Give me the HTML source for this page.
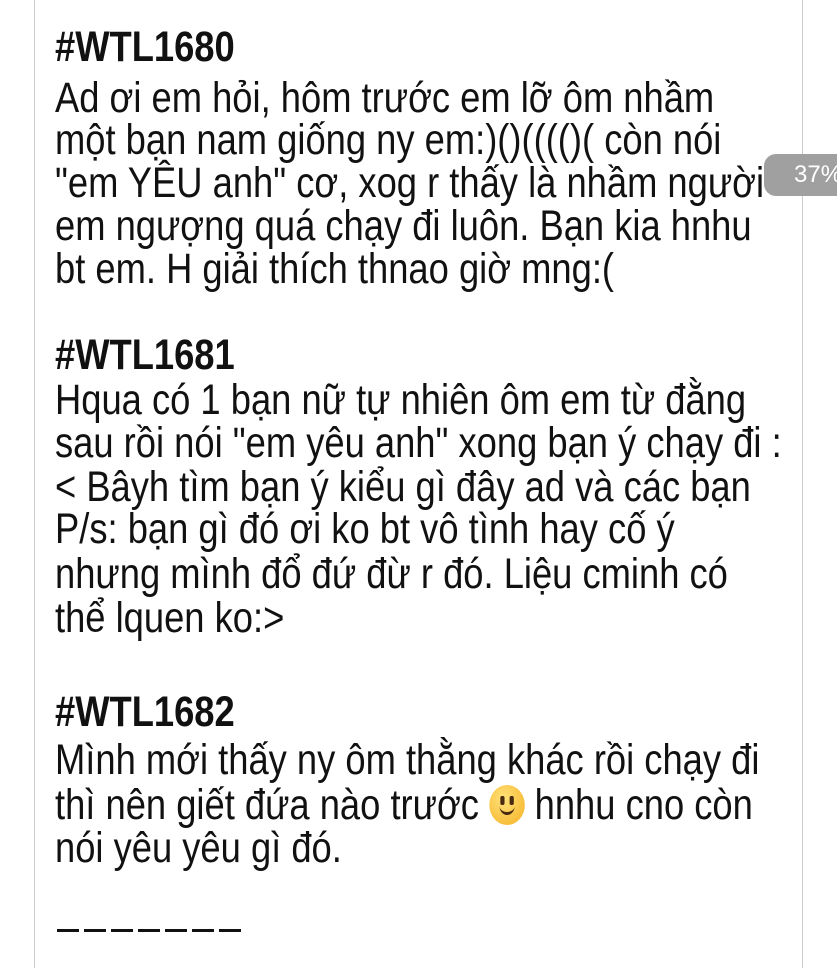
<!DOCTYPE html>
<html><head><meta charset="utf-8"><style>
body{margin:0;width:837px;height:960px;background:#fff;overflow:hidden;position:relative;font-family:"Liberation Sans",sans-serif;color:#111}
.card{position:absolute;left:34px;top:-2px;width:767px;height:970px;border-left:1px solid #ccc;border-right:1px solid #ccc}
.l{position:absolute;left:55px;font-size:43px;line-height:44px;white-space:nowrap;transform:scaleX(0.845);transform-origin:left center}
.b{font-weight:bold}
.badge{position:absolute;left:764px;top:154px;width:76px;height:42px;border-radius:12px 0 0 12px;background:#a0a0a0;color:#fff;font-size:24px;line-height:42px;padding-left:30px;box-sizing:border-box}
.emo{display:inline-block;width:42px;height:40px;border-radius:50%;background:radial-gradient(circle at 40% 35%,#ffe27a,#f5b022);vertical-align:-6px;position:relative}
.emo i{position:absolute;top:11px;width:5px;height:9px;border-radius:2px;background:#4a2a10}
.emo b{position:absolute;left:12px;top:18px;width:18px;height:9px;border-bottom:3px solid #4a2a10;border-radius:0 0 10px 10px}
.dash{position:absolute;top:929px;height:3px;width:22px;background:#111}
</style></head><body>
<div class="card"></div>
<div class="l b" style="top:25px">#WTL1680</div>
<div class="l" style="top:76px">Ad ơi em hỏi, hôm trước em lỡ ôm nhầm</div>
<div class="l" style="top:118px">một bạn nam giống ny em:)()(((()( còn nói</div>
<div class="l" style="top:161px">"em YÊU anh" cơ, xog r thấy là nhầm người</div>
<div class="l" style="top:204px">em ngượng quá chạy đi luôn. Bạn kia hnhu</div>
<div class="l" style="top:247px">bt em. H giải thích thnao giờ mng:(</div>
<div class="badge">37%</div>
<div class="l b" style="top:333px">#WTL1681</div>
<div class="l" style="top:378px">Hqua có 1 bạn nữ tự nhiên ôm em từ đằng</div>
<div class="l" style="top:421px">sau rồi nói "em yêu anh" xong bạn ý chạy đi :</div>
<div class="l" style="top:465px">&lt; Bâyh tìm bạn ý kiểu gì đây ad và các bạn</div>
<div class="l" style="top:507px">P/s: bạn gì đó ơi ko bt vô tình hay cố ý</div>
<div class="l" style="top:552px">nhưng mình đổ đứ đừ r đó. Liệu cminh có</div>
<div class="l" style="top:596px">thể lquen ko:&gt;</div>
<div class="l b" style="top:690px">#WTL1682</div>
<div class="l" style="top:738px">Mình mới thấy ny ôm thằng khác rồi chạy đi</div>
<div class="l" style="top:783px">thì nên giết đứa nào trước <span class="emo"><i style="left:13px"></i><i style="left:24px"></i><b></b></span> hnhu cno còn</div>
<div class="l" style="top:826px">nói yêu yêu gì đó.</div>
<div class="dash" style="left:57px"></div><div class="dash" style="left:84px"></div><div class="dash" style="left:111px"></div><div class="dash" style="left:138px"></div><div class="dash" style="left:165px"></div><div class="dash" style="left:192px"></div><div class="dash" style="left:219px"></div>
</body></html>
